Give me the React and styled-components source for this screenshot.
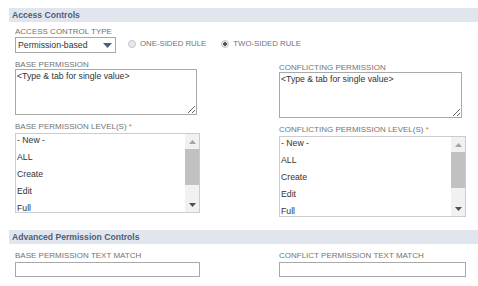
import React from 'react'
import styled, { createGlobalStyle } from 'styled-components'

const GlobalStyle = createGlobalStyle`
  body {
    margin: 0;
    background: #fff;
    font-family: "Liberation Sans", Arial, sans-serif;
  }
`

const levels = ['- New -', 'ALL', 'Create', 'Edit', 'Full']

const PermissionList = ({ width, height }) => (
  <ListBox $width={width} $height={height}>
    <Items>
      {levels.map(l => <Item key={l}>{l}</Item>)}
    </Items>
    <ScrollBar>
      <ScrollArrow>
        <svg width="7" height="4" viewBox="0 0 7 4"><path d="M0 4 L3.5 0 L7 4 Z" fill="#a3a3a3" /></svg>
      </ScrollArrow>
      <Thumb />
      <Track />
      <ScrollArrow>
        <svg width="7" height="4" viewBox="0 0 7 4"><path d="M0 0 L7 0 L3.5 4 Z" fill="#505050" /></svg>
      </ScrollArrow>
    </ScrollBar>
  </ListBox>
)

export default function App() {
  return (
    <Page>
      <GlobalStyle />
      <SectionHeader>Access Controls</SectionHeader>
      <SectionBody>
        <FieldLabel $top={5} $lh={10}>Access Control Type</FieldLabel>
        <TypeRow>
          <SelectBox>
            <span>Permission-based</span>
            <svg width="9" height="5" viewBox="0 0 9 5"><path d="M0 0 L9 0 L4.5 5 Z" fill="#4d5e7a" /></svg>
          </SelectBox>
          <RadioGroup>
            <RadioOption>
              <RadioDot />
              One-sided rule
            </RadioOption>
            <RadioOption>
              <RadioDot $checked />
              Two-sided rule
            </RadioOption>
          </RadioGroup>
        </TypeRow>

        <Columns>
          <Column>
            <FieldLabel $top={7}>Base Permission</FieldLabel>
            <TextArea $width={182} defaultValue="<Type & tab for single value>" />
            <FieldLabel $top={7} $bottom={2}>Base Permission Level(s) <Req>*</Req></FieldLabel>
            <PermissionList width={185} height={80} />
          </Column>
          <Column $shift={3}>
            <FieldLabel $top={7}>Conflicting Permission</FieldLabel>
            <TextArea $width={183} defaultValue="<Type & tab for single value>" />
            <FieldLabel $top={7} $bottom={2}>Conflicting Permission Level(s) <Req>*</Req></FieldLabel>
            <PermissionList width={187} height={81} />
          </Column>
        </Columns>
      </SectionBody>

      <SectionHeader $top={13}>Advanced Permission Controls</SectionHeader>
      <SectionBody>
        <Columns>
          <Column>
            <FieldLabel $top={7}>Base Permission Text Match</FieldLabel>
            <TextInput $width={185} />
          </Column>
          <Column>
            <FieldLabel $top={7}>Conflict Permission Text Match</FieldLabel>
            <TextInput $width={187} />
          </Column>
        </Columns>
      </SectionBody>
    </Page>
  )
}

const Page = styled.div`
  padding: 8px 0 0 9px;
  width: 478px;
  height: 286px;
  box-sizing: border-box;
  overflow: hidden;
`

const SectionHeader = styled.div`
  margin-top: ${p => p.$top || 0}px;
  height: 14px;
  line-height: 14px;
  padding-left: 3px;
  background: #e1e6ee;
  color: #4d5e7a;
  font-size: 8.6px;
  font-weight: bold;
`

const SectionBody = styled.div`
  padding-left: 6px;
`

const FieldLabel = styled.div`
  margin-top: ${p => p.$top || 0}px;
  margin-bottom: ${p => p.$bottom || 0}px;
  font-size: 8px;
  line-height: ${p => p.$lh || 9}px;
  color: #737373;
  text-transform: uppercase;
  white-space: nowrap;
`

const Req = styled.span`
  color: #e5782f;
`

const TypeRow = styled.div`
  display: flex;
  align-items: center;
  gap: 12px;
`

const SelectBox = styled.div`
  width: 101px;
  height: 16px;
  box-sizing: border-box;
  border: 1px solid #a9a9a9;
  display: flex;
  align-items: center;
  justify-content: space-between;
  padding: 0 3px 0 2px;
  font-size: 8.7px;
  color: #333;
  svg { margin-top: 1px; }
`

const RadioGroup = styled.div`
  display: flex;
  align-items: center;
  gap: 15px;
  margin-bottom: 3px;
`

const RadioOption = styled.div`
  display: flex;
  align-items: center;
  gap: 4px;
  font-size: 7.8px;
  color: #737373;
  text-transform: uppercase;
`

const RadioDot = styled.span`
  width: 6px;
  height: 6px;
  border-radius: 50%;
  border: 1px solid #c4c4c4;
  background: ${p => p.$checked ? 'radial-gradient(circle, #555 0 1.6px, #e8e8e8 2px)' : '#e8e8e8'};
`

const Columns = styled.div`
  display: grid;
  grid-template-columns: 264px 1fr;
  align-items: start;
`

const Column = styled.div`
  margin-top: ${p => p.$shift || 0}px;
  display: flex;
  flex-direction: column;
  align-items: flex-start;
`

const TextArea = styled.textarea`
  width: ${p => p.$width}px;
  height: 46px;
  box-sizing: border-box;
  margin: 0;
  border: 1px solid #a9a9a9;
  padding: 1px;
  font-family: "Liberation Sans", Arial, sans-serif;
  font-size: 8.7px;
  line-height: 10px;
  color: #333;
  outline: none;
`

const ListBox = styled.div`
  width: ${p => p.$width}px;
  height: ${p => p.$height}px;
  box-sizing: border-box;
  border: 1px solid #ccc;
  display: flex;
  overflow: hidden;
`

const Items = styled.div`
  flex: 1;
  overflow: hidden;
`

const Item = styled.div`
  height: 17px;
  line-height: 13px;
  padding-left: 1px;
  font-size: 8.7px;
  color: #333;
`

const ScrollBar = styled.div`
  width: 14px;
  background: #f1f1f1;
  display: flex;
  flex-direction: column;
`

const ScrollArrow = styled.div`
  height: 15px;
  display: flex;
  align-items: center;
  justify-content: center;
`

const Thumb = styled.div`
  height: 36px;
  background: #c1c1c1;
`

const Track = styled.div`
  flex: 1;
`

const TextInput = styled.input`
  width: ${p => p.$width}px;
  height: 15px;
  box-sizing: border-box;
  margin: 2px 0 0;
  border: 1px solid #a9a9a9;
  padding: 0 2px;
  font-family: "Liberation Sans", Arial, sans-serif;
  font-size: 8.7px;
  outline: none;
`
